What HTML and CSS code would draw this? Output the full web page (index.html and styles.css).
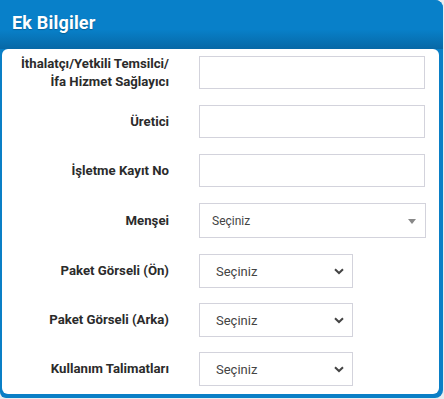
FILE: index.html
```html
<!DOCTYPE html>
<html lang="tr">
<head>
<meta charset="utf-8">
<meta name="viewport" content="width=device-width, initial-scale=1.0">
<link rel="stylesheet" href="styles.css">
</head>
<body>

  <div class="panel">
    <div class="panel-head">Ek Bilgiler</div>

    <div class="panel-body">
      <div class="row">
        <label class="row-label">İthalatçı/Yetkili Temsilci/<br>İfa Hizmet Sağlayıcı</label>
        <input class="field" type="text">
      </div>

      <div class="row">
        <label class="row-label">Üretici</label>
        <input class="field" type="text">
      </div>

      <div class="row">
        <label class="row-label">İşletme Kayıt No</label>
        <input class="field" type="text">
      </div>

      <div class="row row-combo">
        <label class="row-label">Menşei</label>
        <div class="combo">
          <span class="combo-text">Seçiniz</span>
          <span class="combo-caret"></span>
        </div>
      </div>

      <div class="row row-select">
        <label class="row-label">Paket Görseli (Ön)</label>
        <span class="select-wrap">
          <select class="select"><option>Seçiniz</option></select>
          <svg class="chevron" width="10" height="7" viewBox="0 0 10 7"><path d="M1 1.2 L5 5 L9 1.2" fill="none" stroke="#444" stroke-width="2"/></svg>
        </span>
      </div>

      <div class="row row-select">
        <label class="row-label">Paket Görseli (Arka)</label>
        <span class="select-wrap">
          <select class="select"><option>Seçiniz</option></select>
          <svg class="chevron" width="10" height="7" viewBox="0 0 10 7"><path d="M1 1.2 L5 5 L9 1.2" fill="none" stroke="#444" stroke-width="2"/></svg>
        </span>
      </div>

      <div class="row row-select">
        <label class="row-label">Kullanım Talimatları</label>
        <span class="select-wrap">
          <select class="select"><option>Seçiniz</option></select>
          <svg class="chevron" width="10" height="7" viewBox="0 0 10 7"><path d="M1 1.2 L5 5 L9 1.2" fill="none" stroke="#444" stroke-width="2"/></svg>
        </span>
      </div>
    </div>
  </div>

</body>
</html>
```

FILE: styles.css
```css
body {
  margin: 0;
  background-color: #e9ecef;
  font-family: Roboto, "Open Sans", sans-serif;
}

.panel {
  width: 443px;
  background-color: #0a7fc6;
  border-radius: 0 8px 8px 6px;
  padding: 0 4px 4px 2px;
  box-sizing: border-box;
}

.panel-head {
  height: 49px;
  margin: 0 -4px 0 -2px;
  padding: 12px 0 0 12px;
  box-sizing: border-box;
  background: linear-gradient(to bottom, #0880c9 0%, #0880c9 60%, #0768a6 100%);
  border-radius: 0 8px 0 0;
  color: #fff;
  font-size: 18px;
  font-weight: bold;
  letter-spacing: 0.2px;
  text-shadow: 0 1px 1px rgba(0, 0, 0, 0.25);
}

.panel-body {
  background-color: #fff;
  border-radius: 6px;
  padding: 7px 0 8px 0;
}

.row {
  display: flex;
  align-items: center;
  height: 33px;
  margin-bottom: 16px;
}

.row-combo {
  height: 35px;
}

.row-select {
  height: 34px;
  margin-bottom: 15px;
}

.row:last-child {
  margin-bottom: 0;
}

.row-label {
  width: 167px;
  margin-right: 30px;
  text-align: right;
  color: #2b2b2b;
  font-size: 13.2px;
  font-weight: bold;
  line-height: 18px;
}

.field {
  width: 226px;
  height: 33px;
  margin: 0;
  box-sizing: border-box;
  border: 1px solid #d3d3dc;
  border-radius: 0;
  background: #fff;
  outline: none;
}

.combo {
  position: relative;
  width: 227px;
  height: 35px;
  box-sizing: border-box;
  border: 1px solid #d3d3dc;
  display: flex;
  align-items: center;
  padding-left: 12px;
  font-size: 12px;
  color: #444;
}

.combo-caret {
  position: absolute;
  right: 9px;
  top: 15px;
  width: 0;
  height: 0;
  border-left: 4px solid transparent;
  border-right: 4px solid transparent;
  border-top: 5px solid #888;
}

.select-wrap {
  position: relative;
  display: inline-block;
}

.select {
  display: block;
  width: 154px;
  height: 34px;
  margin: 0;
  box-sizing: border-box;
  border: 1px solid #d3d3dc;
  border-radius: 0;
  background: #fff;
  padding: 0 0 0 16px;
  font-family: Roboto, "Open Sans", sans-serif;
  font-size: 13px;
  color: #444;
  -webkit-appearance: none;
  appearance: none;
  outline: none;
}

.chevron {
  position: absolute;
  right: 9px;
  top: 14px;
  pointer-events: none;
}
```
